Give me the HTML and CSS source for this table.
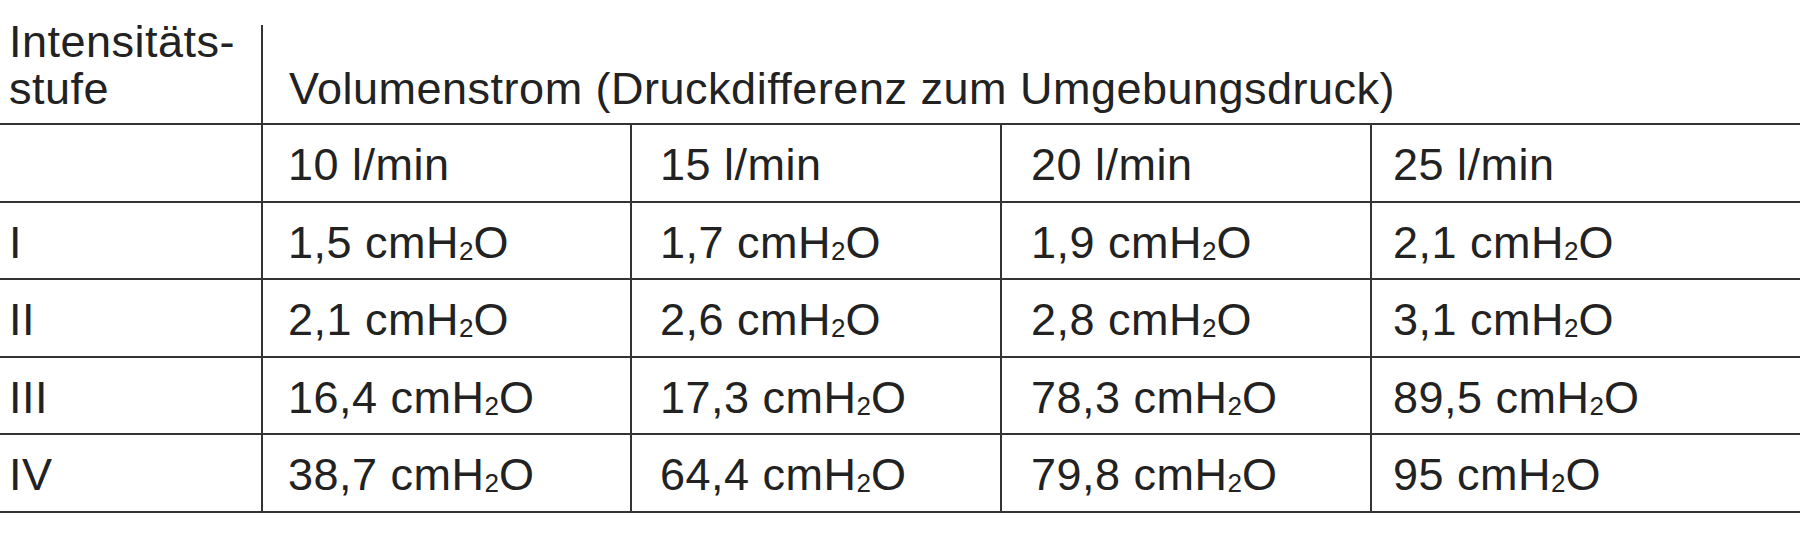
FILE: index.html
```html
<!DOCTYPE html>
<html lang="de">
<head>
<meta charset="utf-8">
<title>Intensitätsstufen</title>
<link rel="stylesheet" href="styles.css">
</head>
<body>
<div class="page">
<table class="pressure-table">
<colgroup>
<col class="c-level">
<col class="c-a">
<col class="c-b">
<col class="c-c">
<col class="c-d">
</colgroup>
<thead>
<tr>
<th class="level-head">Intensitäts-<br>stufe</th>
<th class="flow-head" colspan="4">Volumenstrom (Druckdifferenz zum Umgebungsdruck)</th>
</tr>
</thead>
<tbody>
<tr>
<td class="level"></td>
<td class="v va">10 l/min</td>
<td class="v vb">15 l/min</td>
<td class="v vc">20 l/min</td>
<td class="v vd">25 l/min</td>
</tr>
<tr>
<td class="level">I</td>
<td class="v va">1,5 cmH<sub class="idx">2</sub>O</td>
<td class="v vb">1,7 cmH<sub class="idx">2</sub>O</td>
<td class="v vc">1,9 cmH<sub class="idx">2</sub>O</td>
<td class="v vd">2,1 cmH<sub class="idx">2</sub>O</td>
</tr>
<tr>
<td class="level">II</td>
<td class="v va">2,1 cmH<sub class="idx">2</sub>O</td>
<td class="v vb">2,6 cmH<sub class="idx">2</sub>O</td>
<td class="v vc">2,8 cmH<sub class="idx">2</sub>O</td>
<td class="v vd">3,1 cmH<sub class="idx">2</sub>O</td>
</tr>
<tr>
<td class="level">III</td>
<td class="v va">16,4 cmH<sub class="idx">2</sub>O</td>
<td class="v vb">17,3 cmH<sub class="idx">2</sub>O</td>
<td class="v vc">78,3 cmH<sub class="idx">2</sub>O</td>
<td class="v vd">89,5 cmH<sub class="idx">2</sub>O</td>
</tr>
<tr>
<td class="level">IV</td>
<td class="v va">38,7 cmH<sub class="idx">2</sub>O</td>
<td class="v vb">64,4 cmH<sub class="idx">2</sub>O</td>
<td class="v vc">79,8 cmH<sub class="idx">2</sub>O</td>
<td class="v vd">95 cmH<sub class="idx">2</sub>O</td>
</tr>
</tbody>
</table>
</div>
</body>
</html>
```
FILE: styles.css
```css
html, body {
  margin: 0;
  padding: 0;
  background: #ffffff;
}

.page {
  padding-top: 18px;
}

.pressure-table {
  border-collapse: separate;
  border-spacing: 0;
  table-layout: fixed;
  width: 1800px;
  font-family: "Liberation Sans", Arial, sans-serif;
  font-size: 45px;
  letter-spacing: 0.5px;
  color: #222222;
}

.c-level { width: 261px; }
.c-a { width: 369px; }
.c-b { width: 370px; }
.c-c { width: 370px; }
.c-d { width: 430px; }

.pressure-table th,
.pressure-table td {
  padding: 0;
  text-align: left;
  font-weight: normal;
  line-height: 45px;
  vertical-align: top;
  border-bottom: 2px solid #333333;
  white-space: nowrap;
}

.pressure-table td + td {
  border-left: 2px solid #333333;
}

.pressure-table .level-head,
.pressure-table .flow-head {
  vertical-align: bottom;
  line-height: 47px;
}

.pressure-table .level-head {
  padding: 0 0 11px 9px;
}

.pressure-table .flow-head {
  padding: 0 0 11px 28px;
  background: linear-gradient(#333333, #333333) left 7px / 2px calc(100% - 7px) no-repeat;
}

.pressure-table tbody tr {
  height: 77.5px;
}

.pressure-table td.level {
  padding: 17px 0 0 9px;
}

.pressure-table td.v {
  padding-top: 17px;
}

.pressure-table td.va { padding-left: 25px; }
.pressure-table td.vb { padding-left: 28px; }
.pressure-table td.vc { padding-left: 29px; }
.pressure-table td.vd { padding-left: 21px; }

.idx {
  font-size: 26px;
  line-height: 0;
  letter-spacing: 0;
  vertical-align: -2px;
}
```
